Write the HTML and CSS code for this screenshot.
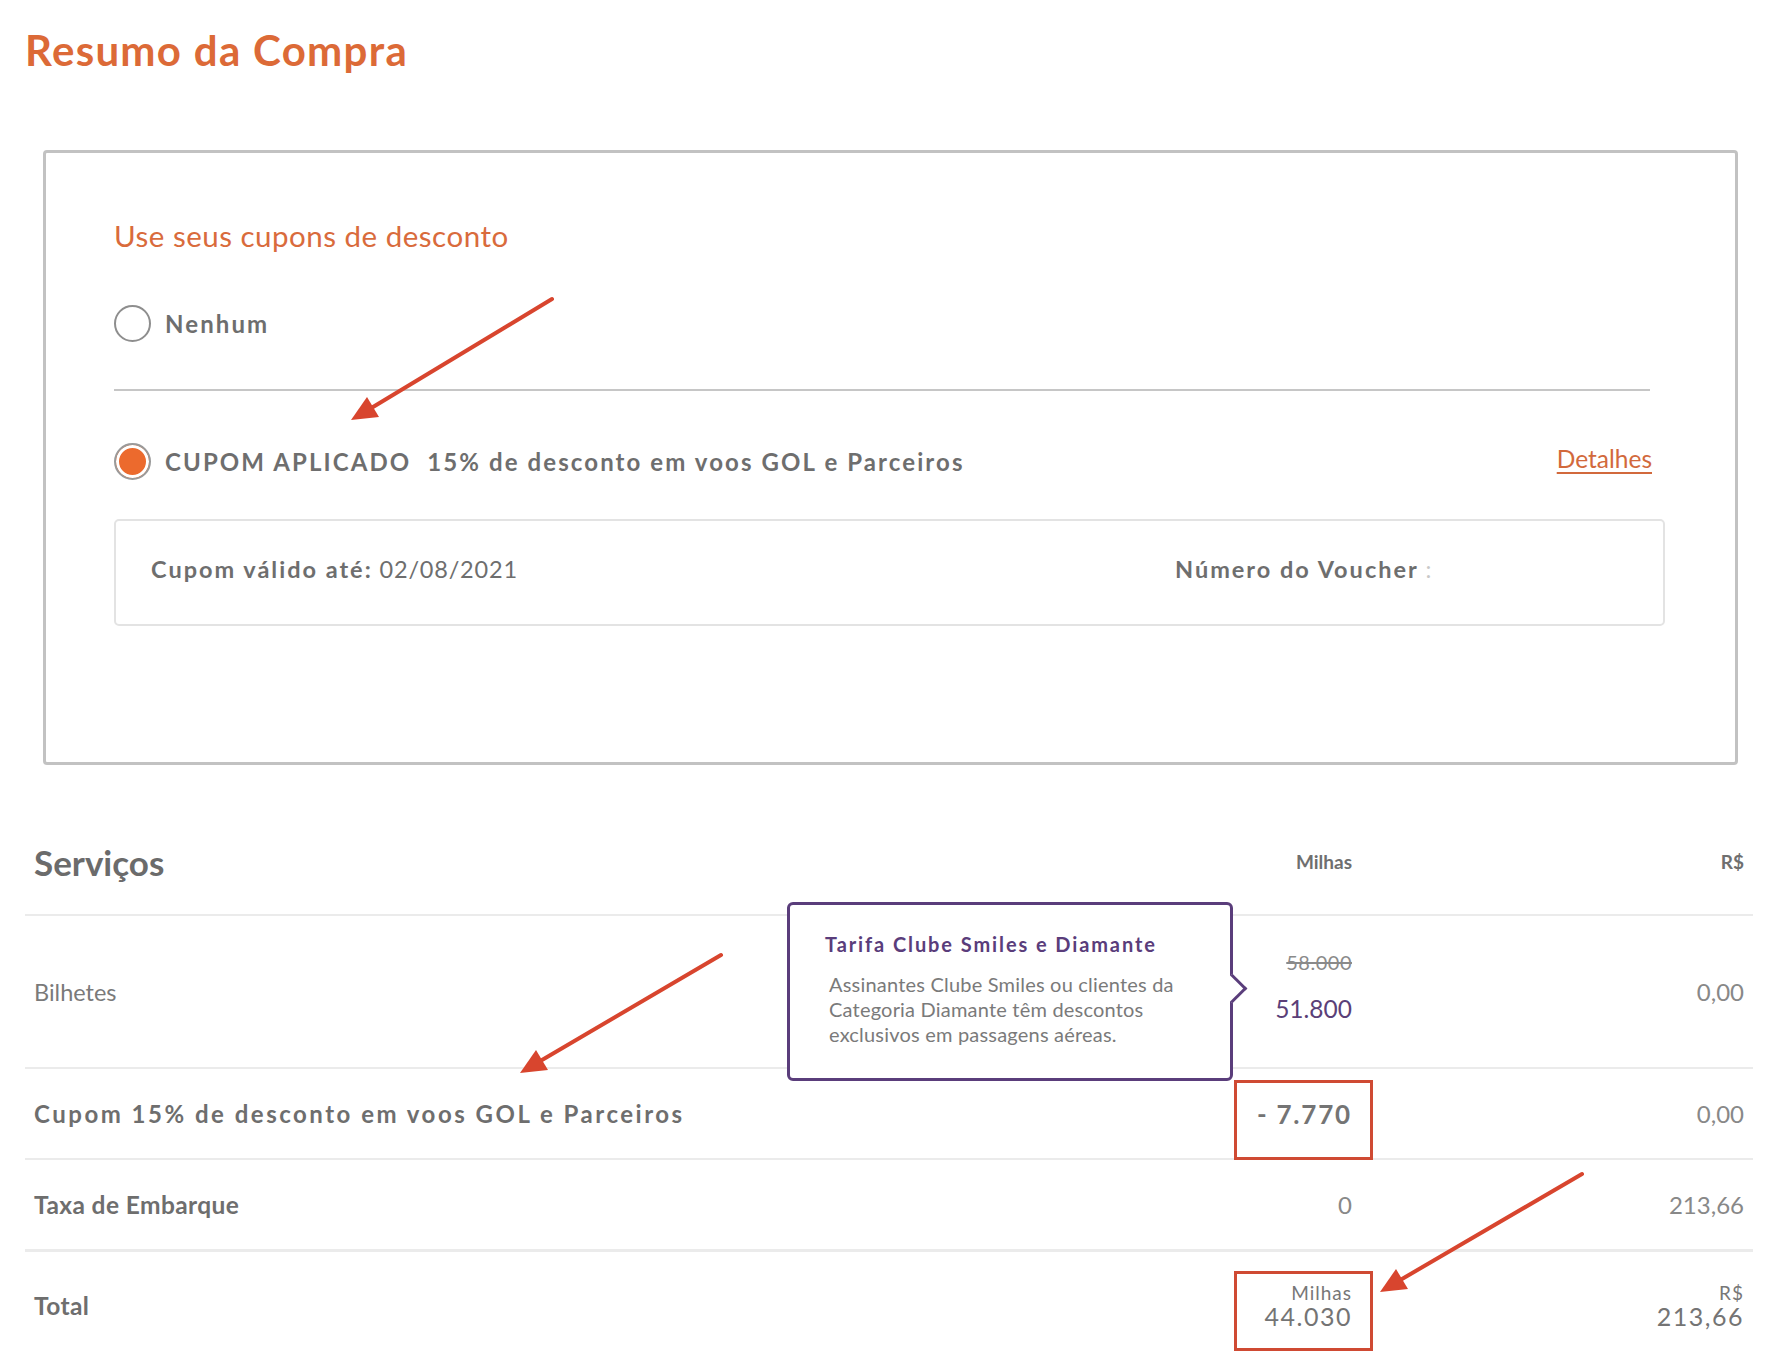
FILE: index.html
```
<!DOCTYPE html>
<html lang="pt-BR">
<head>
	<meta charset="UTF-8">
	<title>Resumo da Compra</title>
	<link rel="stylesheet" href="styles.css">
</head>
<body>
	<div class="page">
		<h1 class="title">Resumo da Compra</h1>

		<section class="coupons">
			<h2 class="coupons-title">Use seus cupons de desconto</h2>
			<div class="option">
				<span class="radio"></span>
				<span class="option-label">Nenhum</span>
			</div>
			<hr class="divider">
			<div class="option option-applied">
				<span class="radio checked"></span>
				<span class="option-label">CUPOM APLICADO&nbsp; 15% de desconto em voos GOL e Parceiros</span>
				<a class="details" href="#">Detalhes</a>
			</div>
			<div class="voucher">
				<div class="voucher-item"><b>Cupom válido até:</b> 02/08/2021</div>
				<div class="voucher-item"><b>Número do Voucher</b> <span class="cut">:</span></div>
			</div>
		</section>

		<section class="services">
			<div class="svc-row svc-head">
				<h3 class="svc-title">Serviços</h3>
				<span class="cell-miles">Milhas</span>
				<span class="cell-brl">R$</span>
			</div>

			<div class="svc-row row-tickets">
				<span class="cell-label">Bilhetes</span>
				<div class="cell-miles">
					<div class="stack">
						<span class="old-price">58.000</span>
						<span class="new-price">51.800</span>
					</div>
				</div>
				<span class="cell-brl num">0,00</span>

				<div class="tip">
					<div class="tip-title">Tarifa Clube Smiles e Diamante</div>
					<p class="tip-text">Assinantes Clube Smiles ou clientes da<br>Categoria Diamante têm descontos<br>exclusivos em passagens aéreas.</p>
				</div>
			</div>

			<div class="svc-row row-coupon">
				<span class="cell-label strong">Cupom 15% de desconto em voos GOL e Parceiros</span>
				<span class="cell-miles discount mark">- 7.770</span>
				<span class="cell-brl num">0,00</span>
			</div>

			<div class="svc-row row-tax">
				<span class="cell-label semi">Taxa de Embarque</span>
				<span class="cell-miles num">0</span>
				<span class="cell-brl num">213,66</span>
			</div>

			<div class="svc-row row-total">
				<span class="cell-label semi">Total</span>
				<div class="cell-miles mark mark-total">
					<span class="small">Milhas</span>
					<span class="big">44.030</span>
				</div>
				<div class="cell-brl">
					<span class="small">R$</span>
					<span class="big">213,66</span>
				</div>
			</div>
		</section>

		<!-- setas de anotação -->
		<svg class="notes" width="1778" height="1362" viewBox="0 0 1778 1362">
			<g stroke="#d8452e" stroke-width="4" stroke-linecap="round">
				<line x1="552" y1="299" x2="373" y2="407"/>
				<line x1="721" y1="955" x2="542" y2="1060"/>
				<line x1="1582" y1="1174" x2="1402" y2="1279"/>
			</g>
			<g fill="#d8452e">
				<polygon points="351,420 379,417 367,397"/>
				<polygon points="520,1073 548,1070 536,1050"/>
				<polygon points="1380,1292 1408,1289 1396,1269"/>
			</g>
		</svg>
	</div>
</body>
</html>
```

FILE: styles.css
```
*{box-sizing: border-box;}
body{margin: 0; background: #fff; font-family: Lato, "Open Sans", sans-serif; color: #707070;}
.page{position: relative; width: 1778px; height: 1362px; padding: 25px 25px 0 25px; overflow: hidden;}

.title{margin: 0; font-size: 42px; line-height: 50px; font-weight: 700; letter-spacing: 1.3px; color: #dc6a37;}

/* cupons */
.coupons{margin: 75px 15px 0 18px; border: 3px solid #c2c2c2; border-radius: 4px; padding: 65px 70px 136px 68px;}
.coupons-title{margin: 0; font-size: 29.5px; line-height: 35px; font-weight: 400; letter-spacing: 0.5px; color: #d96b3c;}
.option{display: flex; align-items: center; gap: 14px; height: 37px; margin-top: 52px;}
.option-applied{margin-right: 13px;}
.radio{width: 37px; height: 37px; border-radius: 50%; border: 2px solid #8e8e8e; background: #fff; flex: none;}
.radio.checked{border-color: #9a9a9a; background: #ec6a2d; box-shadow: inset 0 0 0 3px #fff;}
.option-label{font-size: 24px; font-weight: 700; letter-spacing: 2.1px; color: #6e6e6e; white-space: pre;}
.details{margin-left: auto; margin-top: -6px; font-size: 24.5px; color: #d2693c; text-decoration: underline; text-underline-offset: 4px;}
.divider{margin: 47px 15px 0 0; border: 0; border-top: 2px solid #c6c6c6; height: 0;}
.voucher{margin-top: 39px; height: 107px; border: 2px solid #e3e3e3; border-radius: 5px; padding: 0 0 8px 35px; display: grid; grid-template-columns: 1fr 488px; align-items: center;}
.voucher-item{font-size: 23.5px; letter-spacing: 0.8px; color: #6e6e6e;}
.voucher-item b{font-weight: 700; letter-spacing: 2px;}
.cut{color: #c8c8c8;}

/* serviços */
.services{margin-top: 54px;}
.svc-row{position: relative; display: flex; align-items: center; padding: 0 9px; border-bottom: 2px solid #ebebeb;}
.cell-label{flex: 1; font-size: 23.5px; color: #7a7a7a;}
.cell-label.strong{font-weight: 700; font-size: 24px; letter-spacing: 2.5px; color: #6e6e6e;}
.cell-label.semi{font-weight: 700; font-size: 24.5px; letter-spacing: 0.4px; color: #6e6e6e;}
.cell-miles{width: 200px; text-align: right;}
.cell-brl{width: 392px; text-align: right;}
.num{font-size: 24px; color: #888;}

.svc-head{height: 97px; padding-bottom: 10px;}
.svc-title{flex: 1; margin: 0; font-size: 35px; font-weight: 700; color: #6b6b6b;}
.svc-head .cell-miles, .svc-head .cell-brl{font-size: 19px; font-weight: 700; color: #6f6f6f;}

.row-tickets{height: 153px;}
.stack{display: flex; flex-direction: column; align-items: flex-end; gap: 21px; padding-bottom: 8px;}
.old-price{font-size: 20px; line-height: 22px; letter-spacing: 0.5px; color: #8a8a8a; text-decoration: line-through;}
.new-price{font-size: 24.5px; line-height: 30px; color: #5b3f78;}

.row-coupon{height: 91px;}
.discount{font-size: 26px; line-height: 30px; font-weight: 700; letter-spacing: 1.8px; color: #747474;}
.row-tax{height: 92px; border-bottom-width: 3px;}
.row-total{height: 107px; border-bottom: 0;}
.row-total .cell-miles, .row-total .cell-brl{display: flex; flex-direction: column; align-items: flex-end;}
.small{font-size: 19px; line-height: 20px; letter-spacing: 1px; color: #777;}
.big{font-size: 25px; line-height: 26px; letter-spacing: 1.5px; color: #747474;}

/* marcação vermelha */
.mark{position: relative;}
.mark::after{content: ''; position: absolute; right: -21px; width: 133px; top: -19px; height: 74px; border: 3.5px solid #cf4a33;}
.mark-total::after{top: -12px; height: 74px;}

/* tooltip */
.tip{position: absolute; top: -14px; left: 762px; width: 446px; height: 179px; border: 3px solid #5a3d7b; border-radius: 6px; background: #fff; padding: 27px 10px 0 35px; z-index: 2;}
.tip::after{content: ''; position: absolute; top: 73px; right: -13px; width: 18px; height: 18px; background: #fff; border-top: 3px solid #5a3d7b; border-right: 3px solid #5a3d7b; transform: rotate(45deg);}
.tip-title{font-size: 20px; line-height: 24px; font-weight: 700; letter-spacing: 1.9px; color: #5a3d7b;}
.tip-text{margin: 16px 0 0 4px; font-size: 20px; line-height: 25px; letter-spacing: 0.2px; color: #7a7a7a; white-space: nowrap;}

.notes{position: absolute; left: 0; top: 0; pointer-events: none; z-index: 3;}
```
